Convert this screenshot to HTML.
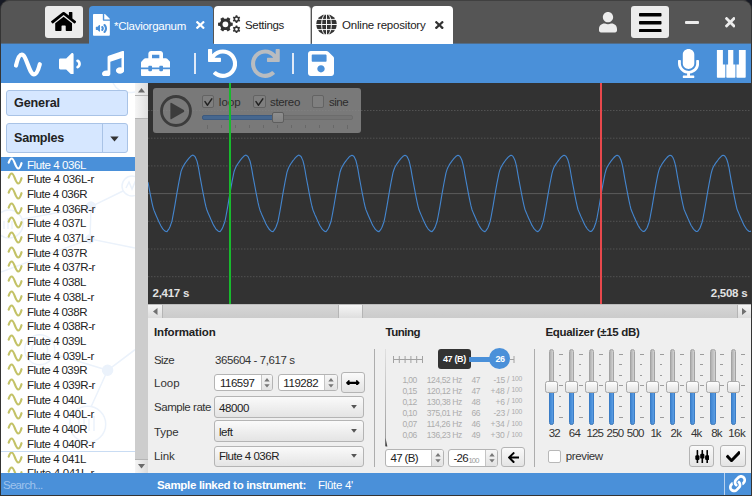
<!DOCTYPE html>
<html lang="en"><head><meta charset="utf-8"><title>Polyphone - Claviorganum</title>
<style>
html,body{margin:0;padding:0}
body{width:752px;height:496px;overflow:hidden;position:relative;background:#171a24;font-family:"Liberation Sans",sans-serif;font-size:12px}
.a{position:absolute;box-sizing:border-box}
.t{position:absolute;white-space:pre;line-height:16px;height:16px}
</style></head><body>
<div class="a" style="left:0px;top:0px;width:752px;height:496px;background:#343434;border-radius:9px 9px 0 0;"></div>
<div class="a" style="left:1px;top:1px;width:750px;height:43px;background:#555555;border-radius:8px 8px 0 0;"></div>
<div class="a" style="left:1px;top:0px;width:750px;height:2px;background:#404040;border-radius:8px 8px 0 0;height:9px;clip-path:inset(0 0 8px 0);"></div>
<div class="a" style="left:1px;top:43px;width:750px;height:40px;background:#4a90d9;"></div>
<div class="a" style="left:1px;top:473px;width:750px;height:22px;background:#4a90d9;"></div>
<div class="a" style="left:1px;top:43px;width:750px;height:1px;background:#516d8a;"></div>
<div class="a" style="left:45px;top:6px;width:38px;height:32px;background:#ececec;border-radius:3px;"></div>
<svg class="a" style="left:51.00px;top:12.25px" width="25.25" height="19.00" viewBox="-0.01 32.05 576.04 447.95" preserveAspectRatio="none"><path fill="#000" d="M280.37 148.26L96 300.11V464a16 16 0 0 0 16 16l112.06-.29a16 16 0 0 0 15.92-16V368a16 16 0 0 1 16-16h64a16 16 0 0 1 16 16v95.64a16 16 0 0 0 16 16.05L464 480a16 16 0 0 0 16-16V300L295.67 148.26a12.19 12.19 0 0 0-15.3 0zM571.6 251.47L488 182.56V44.05a12 12 0 0 0-12-12h-56a12 12 0 0 0-12 12v72.61L318.47 43a48 48 0 0 0-61 0L4.34 251.47a12 12 0 0 0-1.6 16.9l25.5 31A12 12 0 0 0 45.15 301l235.22-193.74a12.19 12.19 0 0 1 15.3 0L530.9 301a12 12 0 0 0 16.9-1.6l25.5-31a12 12 0 0 0-1.7-16.93z"/></svg>
<div class="a" style="left:88.8px;top:6.4px;width:124.7px;height:37.6px;background:#4a90d9;border-radius:4px 4px 0 0;"></div>
<svg class="a" style="left:92.90px;top:13.75px" width="16.85" height="21.85" viewBox="0 0 384 512" preserveAspectRatio="none"><path fill="#fff" d="M224 136V0H24C10.7 0 0 10.7 0 24v464c0 13.3 10.7 24 24 24h336c13.3 0 24-10.7 24-24V160H248c-13.2 0-24-10.8-24-24zm-64 268c0 10.7-12.9 16-20.5 8.500L104 376H76c-6.600 0-12-5.400-12-12v-56c0-6.600 5.400-12 12-12h28l35.500-36.500c7.600-7.600 20.500-2.200 20.500 8.500v136zm33.200-47.600c9.100-9.300 9.100-24.100 0-33.400-22.100-22.800 12.200-56.200 34.400-33.500 27.200 27.900 27.200 72.400 0 100.400-21.800 22.300-56.900-10.400-34.400-33.500zm86-117.100c54.400 55.900 54.400 144.800 0 200.800-21.800 22.400-57-10.300-34.400-33.500 36.200-37.200 36.300-96.500 0-133.800-22.100-22.800 12.300-56.300 34.400-33.500zM384 121.900v6.100H256V0h6.100c6.400 0 12.500 2.500 17 7l97.900 98c4.500 4.500 7 10.600 7 16.900z"/></svg>
<span class="t" style="left:114.00px;top:17.82px;font-size:11.5px;color:#fff;letter-spacing:-0.263px;">*Claviorganum</span>
<svg class="a" style="left:196.20px;top:21.30px" width="8.60" height="8.00" viewBox="0 80 352 352" preserveAspectRatio="none"><path fill="#fff" d="M242.72 256l100.07-100.07c12.28-12.28 12.28-32.19 0-44.48l-22.24-22.24c-12.28-12.28-32.19-12.28-44.48 0L176 189.28 75.93 89.21c-12.28-12.28-32.19-12.28-44.48 0L9.21 111.45c-12.28 12.28-12.28 32.19 0 44.48L109.28 256 9.21 356.070c-12.28 12.28-12.28 32.19 0 44.48l22.24 22.24c12.28 12.28 32.2 12.28 44.48 0L176 322.72l100.07 100.07c12.28 12.28 32.2 12.28 44.48 0l22.24-22.24c12.28-12.28 12.28-32.19 0-44.48L242.72 256z"/></svg>
<div class="a" style="left:213.5px;top:6.4px;width:97.5px;height:37.6px;background:#fff;border-radius:4px 4px 0 0;border-right:1px solid #bdbdbd;"></div>
<svg class="a" style="left:217px;top:14px;" width="25" height="22" viewBox="0 0 25 22"><path d="M15.74 8.74 L15.74 11.86 L13.80 12.12 L12.68 14.07 L13.42 15.87 L10.72 17.43 L9.53 15.89 L7.27 15.89 L6.08 17.43 L3.38 15.87 L4.12 14.07 L3.00 12.12 L1.06 11.86 L1.06 8.74 L3.00 8.48 L4.12 6.53 L3.38 4.73 L6.08 3.17 L7.27 4.71 L9.53 4.71 L10.72 3.17 L13.42 4.73 L12.68 6.53 L13.80 8.48Z M11.30 10.30 A2.9 2.9 0 1 0 5.50 10.30 A2.9 2.9 0 1 0 11.30 10.30Z" fill="#333" fill-rule="evenodd"/><path d="M23.21 6.29 L22.41 7.70 L21.46 7.31 L20.45 7.89 L20.32 8.91 L18.70 8.92 L18.57 7.90 L17.56 7.32 L16.61 7.72 L15.80 6.32 L16.61 5.69 L16.61 4.53 L15.79 3.91 L16.59 2.50 L17.54 2.89 L18.55 2.31 L18.68 1.29 L20.30 1.28 L20.43 2.30 L21.44 2.88 L22.39 2.48 L23.20 3.88 L22.39 4.51 L22.39 5.67Z M20.85 5.10 A1.35 1.35 0 1 0 18.15 5.10 A1.35 1.35 0 1 0 20.85 5.10Z" fill="#333" fill-rule="evenodd"/><path d="M23.21 16.49 L22.41 17.90 L21.46 17.51 L20.45 18.09 L20.32 19.11 L18.70 19.12 L18.57 18.10 L17.56 17.52 L16.61 17.92 L15.80 16.52 L16.61 15.89 L16.61 14.73 L15.79 14.11 L16.59 12.70 L17.54 13.09 L18.55 12.51 L18.68 11.49 L20.30 11.48 L20.43 12.50 L21.44 13.08 L22.39 12.68 L23.20 14.08 L22.39 14.71 L22.39 15.87Z M20.85 15.30 A1.35 1.35 0 1 0 18.15 15.30 A1.35 1.35 0 1 0 20.85 15.30Z" fill="#333" fill-rule="evenodd"/></svg>
<span class="t" style="left:245.00px;top:17.37px;font-size:11.5px;color:#222;letter-spacing:-0.319px;">Settings</span>
<div class="a" style="left:312px;top:6.4px;width:140.5px;height:37.6px;background:#fff;border-radius:4px 4px 0 0;"></div>
<svg class="a" style="left:316px;top:14.4px;" width="21" height="21" viewBox="0 0 21 21"><circle cx="10.5" cy="10.5" r="10.3" fill="#333"/><g stroke="#fff" stroke-width="0.95" fill="none"><ellipse cx="10.5" cy="10.5" rx="4.9" ry="10.8"/><path d="M10.5 0 V21 M0 10.5 H21 M0 5.4 H21 M0 15.6 H21"/></g></svg>
<span class="t" style="left:342.00px;top:17.37px;font-size:11.5px;color:#222;letter-spacing:-0.201px;">Online repository</span>
<svg class="a" style="left:435.30px;top:21.40px" width="8.60" height="8.10" viewBox="0 80 352 352" preserveAspectRatio="none"><path fill="#333" d="M242.72 256l100.07-100.07c12.28-12.28 12.28-32.19 0-44.48l-22.24-22.24c-12.28-12.28-32.19-12.28-44.48 0L176 189.28 75.93 89.21c-12.28-12.28-32.19-12.28-44.48 0L9.21 111.45c-12.28 12.28-12.28 32.19 0 44.48L109.28 256 9.21 356.070c-12.28 12.28-12.28 32.19 0 44.48l22.24 22.24c12.28 12.28 32.2 12.28 44.48 0L176 322.72l100.07 100.07c12.28 12.28 32.2 12.28 44.48 0l22.24-22.24c12.28-12.28 12.28-32.19 0-44.48L242.72 256z"/></svg>
<svg class="a" style="left:599.00px;top:12.00px" width="18.00" height="20.50" viewBox="0 0 448 512" preserveAspectRatio="none"><path fill="#ececec" d="M224 256c70.7 0 128-57.3 128-128S294.7 0 224 0 96 57.3 96 128s57.3 128 128 128zm89.6 32h-16.7c-22.2 10.2-46.9 16-72.9 16s-50.6-5.8-72.9-16h-16.7C60.2 288 0 348.2 0 422.4V464c0 26.5 21.5 48 48 48h352c26.5 0 48-21.5 48-48v-41.6c0-74.2-60.2-134.4-134.4-134.4z"/></svg>
<div class="a" style="left:631px;top:6px;width:38px;height:32px;background:#ececec;border-radius:3px;"></div>
<svg class="a" style="left:639.00px;top:12.50px" width="22.50" height="19.50" viewBox="0 60 448 392" preserveAspectRatio="none"><path fill="#000" d="M16 132h416c8.837 0 16-7.163 16-16V76c0-8.837-7.163-16-16-16H16C7.163 60 0 67.163 0 76v40c0 8.837 7.163 16 16 16zm0 160h416c8.837 0 16-7.163 16-16v-40c0-8.837-7.163-16-16-16H16c-8.837 0-16 7.163-16 16v40c0 8.837 7.163 16 16 16zm0 160h416c8.837 0 16-7.163 16-16v-40c0-8.837-7.163-16-16-16H16c-8.837 0-16 7.163-16 16v40c0 8.837 7.163 16 16 16z"/></svg>
<div class="a" style="left:685px;top:20.6px;width:13.5px;height:3.2px;background:#ececec;border-radius:1px;"></div>
<svg class="a" style="left:724.50px;top:17.00px" width="10.50" height="10.50" viewBox="0 80 352 352" preserveAspectRatio="none"><path fill="#ececec" d="M242.72 256l100.07-100.07c12.28-12.28 12.28-32.19 0-44.48l-22.24-22.24c-12.28-12.28-32.19-12.28-44.48 0L176 189.28 75.93 89.21c-12.28-12.28-32.19-12.28-44.48 0L9.21 111.45c-12.28 12.28-12.28 32.19 0 44.48L109.28 256 9.21 356.070c-12.28 12.28-12.28 32.19 0 44.48l22.24 22.24c12.28 12.28 32.2 12.28 44.48 0L176 322.72l100.07 100.07c12.28 12.28 32.2 12.28 44.48 0l22.24-22.24c12.28-12.28 12.28-32.19 0-44.48L242.72 256z"/></svg>
<svg class="a" style="left:10px;top:48px;" width="36" height="32" viewBox="0 0 36 32"><path d="M6 17.5 C7.5 11 9.5 6.7 11.8 6.7 C16.5 6.7 19 26.3 24 26.3 C26.5 26.3 28.3 22 29.8 16.2" stroke="#fff" stroke-width="4.2" fill="none" stroke-linecap="round"/></svg>
<svg class="a" style="left:59.00px;top:52.60px" width="21.90" height="21.90" viewBox="0 65.0 384.01 384.0" preserveAspectRatio="none"><path fill="#fff" d="M215.03 72.04L126.06 161H24c-13.26 0-24 10.74-24 24v144c0 13.25 10.74 24 24 24h102.06l88.97 88.95c15.03 15.03 40.97 4.47 40.97-16.97V89.02c0-21.47-25.96-31.98-40.97-16.98zm123.2 108.08c-11.58-6.33-26.19-2.16-32.61 9.45-6.39 11.61-2.16 26.2 9.45 32.61C327.98 229.28 336 242.62 336 257c0 14.38-8.02 27.72-20.92 34.81-11.61 6.41-15.84 21-9.45 32.61 6.43 11.66 21.05 15.8 32.61 9.45 28.23-15.55 45.77-45 45.77-76.88s-17.54-61.32-45.78-76.87z"/></svg>
<svg class="a" style="left:101.75px;top:50.50px" width="22.25" height="25.90" viewBox="0 0.03 512 511.97" preserveAspectRatio="none"><path fill="#fff" d="M470.38 1.51L150.41 96A32 32 0 0 0 128 126.51v261.41A139 139 0 0 0 96 384c-53 0-96 28.66-96 64s43 64 96 64 96-28.66 96-64V214.32l256-75v184.61a138.4 138.4 0 0 0-32-3.93c-53 0-96 28.66-96 64s43 64 96 64 96-28.65 96-64V32a32 32 0 0 0-41.62-30.49z"/></svg>
<svg class="a" style="left:140.90px;top:50.75px" width="29.35" height="25.65" viewBox="0 32 512 448" preserveAspectRatio="none"><path fill="#fff" d="M502.63 214.63l-45.25-45.25c-6-6-14.140-9.370-22.630-9.370H384V80c0-26.510-21.490-48-48-48H176c-26.510 0-48 21.490-48 48v80H77.250c-8.490 0-16.620 3.370-22.630 9.370L9.370 214.630c-6 6-9.370 14.140-9.370 22.630V320h128v-16c0-8.840 7.160-16 16-16h32c8.840 0 16 7.160 16 16v16h128v-16c0-8.840 7.160-16 16-16h32c8.840 0 16 7.160 16 16v16h128v-82.750c0-8.480-3.370-16.620-9.370-22.620zM320 160H192V96h128v64zm64 208c0 8.840-7.160 16-16 16h-32c-8.840 0-16-7.160-16-16v-16H192v16c0 8.840-7.160 16-16 16h-32c-8.840 0-16-7.160-16-16v-16H0v96c0 17.670 14.330 32 32 32h448c17.670 0 32-14.330 32-32v-96H384v16z"/></svg>
<div class="a" style="left:194px;top:52.5px;width:2px;height:21.5px;background:#dfe9f7;"></div>
<div class="a" style="left:292px;top:52.5px;width:2px;height:21.5px;background:#dfe9f7;"></div>
<svg class="a" style="left:208.10px;top:48.75px" width="29.15" height="29.00" viewBox="0 0 504.33 504" preserveAspectRatio="none"><path fill="#fff" d="M212.333 224.333H12c-6.627 0-12-5.373-12-12V12C0 5.373 5.373 0 12 0h48c6.627 0 12 5.373 12 12v78.112C117.773 39.279 184.26 7.47 258.175 8.007c136.906.994 246.448 111.623 246.157 248.532C504.041 393.258 393.12 504 256.333 504c-64.089 0-122.496-24.313-166.51-64.215-5.099-4.622-5.334-12.554-.467-17.42l33.967-33.967c4.474-4.474 11.662-4.717 16.401-.525C170.76 415.336 211.58 432 256.333 432c97.268 0 176-78.716 176-176 0-97.267-78.716-176-176-176-58.496 0-110.28 28.476-142.274 72.333h98.274c6.627 0 12 5.373 12 12v48c0 6.627-5.373 12-12 12z"/></svg>
<svg class="a" style="left:251.25px;top:48.75px" width="28.75" height="29.00" viewBox="0 0 504.33 504" preserveAspectRatio="none"><path fill="#b9bcc0" transform="translate(504.33,0) scale(-1,1)" d="M212.333 224.333H12c-6.627 0-12-5.373-12-12V12C0 5.373 5.373 0 12 0h48c6.627 0 12 5.373 12 12v78.112C117.773 39.279 184.26 7.47 258.175 8.007c136.906.994 246.448 111.623 246.157 248.532C504.041 393.258 393.12 504 256.333 504c-64.089 0-122.496-24.313-166.51-64.215-5.099-4.622-5.334-12.554-.467-17.42l33.967-33.967c4.474-4.474 11.662-4.717 16.401-.525C170.76 415.336 211.58 432 256.333 432c97.268 0 176-78.716 176-176 0-97.267-78.716-176-176-176-58.496 0-110.28 28.476-142.274 72.333h98.274c6.627 0 12 5.373 12 12v48c0 6.627-5.373 12-12 12z"/></svg>
<svg class="a" style="left:307.90px;top:51.20px" width="26.00" height="25.00" viewBox="0 32 448 448" preserveAspectRatio="none"><path fill="#fff" d="M433.941 129.941l-83.882-83.882A48 48 0 0 0 316.118 32H48C21.49 32 0 53.49 0 80v352c0 26.51 21.49 48 48 48h352c26.51 0 48-21.49 48-48V163.882a48 48 0 0 0-14.059-33.941zM224 416c-35.346 0-64-28.654-64-64 0-35.346 28.654-64 64-64s64 28.654 64 64c0 35.346-28.654 64-64 64zm96-304.52V212c0 6.627-5.373 12-12 12H76c-6.627 0-12-5.373-12-12V108c0-6.627 5.373-12 12-12h228.52c3.183 0 6.235 1.264 8.485 3.515l3.48 3.48A11.996 11.996 0 0 1 320 111.48z"/></svg>
<svg class="a" style="left:678.00px;top:48.80px" width="21.10" height="29.20" viewBox="0 0 352 512" preserveAspectRatio="none"><path fill="#fff" d="M176 352c53.02 0 96-42.98 96-96V96c0-53.02-42.98-96-96-96S80 42.98 80 96v160c0 53.02 42.98 96 96 96zm160-160h-16c-8.84 0-16 7.16-16 16v48c0 74.8-64.49 134.82-140.79 127.38C96.71 376.89 48 317.11 48 250.3V208c0-8.84-7.16-16-16-16H16c-8.84 0-16 7.16-16 16v40.16c0 89.64 63.97 169.55 152 181.69V464H96c-8.84 0-16 7.16-16 16v16c0 8.84 7.16 16 16 16h160c8.84 0 16-7.16 16-16v-16c0-8.84-7.160-16-16-16h-56v-33.77C285.71 418.47 352 344.9 352 256v-48c0-8.840-7.160-16-16-16z"/></svg>
<svg class="a" style="left:716px;top:49px;" width="31" height="29" viewBox="0 0 31 29"><path d="M0.9 1 H6.9 V15.6 H9.3 V28 Q9.3 28.7 8.6 28.7 H1.6 Q0.9 28.7 0.9 28Z" fill="#fff"/><path d="M12.1 1 H17.3 V15.6 H19.4 V28 Q19.4 28.7 18.7 28.7 H11 Q10.3 28.7 10.3 28 V15.6 H12.1Z" fill="#fff"/><path d="M22.9 1 H29.7 V28 Q29.7 28.7 29 28.7 H21.1 Q20.4 28.7 20.4 28 V15.6 H22.9Z" fill="#fff"/></svg>
<div class="a" style="left:1px;top:83px;width:134px;height:390px;background:#fff;"></div>
<svg class="a" style="left:1px;top:83px;" width="134" height="390" viewBox="0 0 134 390"><g stroke="#ebf2fb" stroke-width="1.5" fill="none"><path d="M112 0 Q118 12 134 9"/><circle cx="131" cy="103" r="10"/><path d="M125 105 L128 99 L131 106 L134 99 L137 105"/><circle cx="8" cy="141" r="14"/><path d="M3 138 V146 M7 135 V146 M11 138 V146"/><path d="M90 123.6 L89 156 L134 165 M89 156 L0 189 M90 123.6 L22 136 M90 123.6 L122 108"/><circle cx="90" cy="123.6" r="4.5" fill="#ebf2fb"/><circle cx="89" cy="156" r="4" fill="#ebf2fb"/><circle cx="38.7" cy="266.7" r="15"/><circle cx="38.7" cy="266.7" r="8"/><path d="M106.6 287.3 L134 266.7 M106.6 287.3 L90 324 M106.6 287.3 L53 271"/><circle cx="106.6" cy="287.3" r="5" fill="#ebf2fb"/><circle cx="86.7" cy="341.2" r="18"/><path d="M78 336 V348 M83 333 V348 M88 336 V348 M93 333 V348"/></g></svg>
<div class="a" style="left:6px;top:90px;width:122px;height:25.8px;background:#d6e7ff;border:1px solid #a9c3e6;border-radius:3px;"></div>
<span class="t" style="left:14.00px;top:95.23px;font-size:12.6px;color:#222;font-weight:700;letter-spacing:-0.132px;">General</span>
<div class="a" style="left:6px;top:123px;width:122px;height:30px;background:#d6e7ff;border:1px solid #a9c3e6;border-radius:3px;"></div>
<div class="a" style="left:101.5px;top:124px;width:1px;height:28px;background:#a9c3e6;"></div>
<span class="t" style="left:14.00px;top:130.23px;font-size:12.6px;color:#222;font-weight:700;letter-spacing:-0.261px;">Samples</span>
<svg class="a" style="left:110px;top:135.5px;" width="9" height="6" viewBox="0 0 9 6"><path d="M0.3 0.5 H8.7 L4.5 5.6Z" fill="#333"/></svg>
<div class="a" style="left:1px;top:157px;width:134px;height:14px;background:#4a90d9;"></div>
<svg class="a" style="left:7.4px;top:157.4px;" width="16" height="13" viewBox="0 0 16 13"><path d="M1.7 5.6 C2.7 2.6 3.6 1.5 4.7 1.5 C7.4 1.5 8.4 11.5 11.2 11.5 C12.5 11.5 13.5 9.6 14.5 6.2" stroke="#fff" stroke-width="2.2" fill="none" stroke-linecap="round"/></svg>
<span class="t" style="left:27.00px;top:156.52px;font-size:11.5px;color:#fff;letter-spacing:-0.411px;">Flute 4 036L</span>
<svg class="a" style="left:7.4px;top:172.1px;" width="16" height="13" viewBox="0 0 16 13"><path d="M1.7 5.6 C2.7 2.6 3.6 1.5 4.7 1.5 C7.4 1.5 8.4 11.5 11.2 11.5 C12.5 11.5 13.5 9.6 14.5 6.2" stroke="#c3c267" stroke-width="2.2" fill="none" stroke-linecap="round"/></svg>
<span class="t" style="left:27.00px;top:171.22px;font-size:11.5px;color:#222;letter-spacing:-0.328px;">Flute 4 036L-r</span>
<svg class="a" style="left:7.4px;top:186.8px;" width="16" height="13" viewBox="0 0 16 13"><path d="M1.7 5.6 C2.7 2.6 3.6 1.5 4.7 1.5 C7.4 1.5 8.4 11.5 11.2 11.5 C12.5 11.5 13.5 9.6 14.5 6.2" stroke="#c3c267" stroke-width="2.2" fill="none" stroke-linecap="round"/></svg>
<span class="t" style="left:27.00px;top:185.92px;font-size:11.5px;color:#222;letter-spacing:-0.487px;">Flute 4 036R</span>
<svg class="a" style="left:7.4px;top:201.5px;" width="16" height="13" viewBox="0 0 16 13"><path d="M1.7 5.6 C2.7 2.6 3.6 1.5 4.7 1.5 C7.4 1.5 8.4 11.5 11.2 11.5 C12.5 11.5 13.5 9.6 14.5 6.2" stroke="#c3c267" stroke-width="2.2" fill="none" stroke-linecap="round"/></svg>
<span class="t" style="left:27.00px;top:200.62px;font-size:11.5px;color:#222;letter-spacing:-0.393px;">Flute 4 036R-r</span>
<svg class="a" style="left:7.4px;top:216.20000000000002px;" width="16" height="13" viewBox="0 0 16 13"><path d="M1.7 5.6 C2.7 2.6 3.6 1.5 4.7 1.5 C7.4 1.5 8.4 11.5 11.2 11.5 C12.5 11.5 13.5 9.6 14.5 6.2" stroke="#c3c267" stroke-width="2.2" fill="none" stroke-linecap="round"/></svg>
<span class="t" style="left:27.00px;top:215.32px;font-size:11.5px;color:#222;letter-spacing:-0.411px;">Flute 4 037L</span>
<svg class="a" style="left:7.4px;top:230.9px;" width="16" height="13" viewBox="0 0 16 13"><path d="M1.7 5.6 C2.7 2.6 3.6 1.5 4.7 1.5 C7.4 1.5 8.4 11.5 11.2 11.5 C12.5 11.5 13.5 9.6 14.5 6.2" stroke="#c3c267" stroke-width="2.2" fill="none" stroke-linecap="round"/></svg>
<span class="t" style="left:27.00px;top:230.02px;font-size:11.5px;color:#222;letter-spacing:-0.328px;">Flute 4 037L-r</span>
<svg class="a" style="left:7.4px;top:245.6px;" width="16" height="13" viewBox="0 0 16 13"><path d="M1.7 5.6 C2.7 2.6 3.6 1.5 4.7 1.5 C7.4 1.5 8.4 11.5 11.2 11.5 C12.5 11.5 13.5 9.6 14.5 6.2" stroke="#c3c267" stroke-width="2.2" fill="none" stroke-linecap="round"/></svg>
<span class="t" style="left:27.00px;top:244.72px;font-size:11.5px;color:#222;letter-spacing:-0.487px;">Flute 4 037R</span>
<svg class="a" style="left:7.4px;top:260.29999999999995px;" width="16" height="13" viewBox="0 0 16 13"><path d="M1.7 5.6 C2.7 2.6 3.6 1.5 4.7 1.5 C7.4 1.5 8.4 11.5 11.2 11.5 C12.5 11.5 13.5 9.6 14.5 6.2" stroke="#c3c267" stroke-width="2.2" fill="none" stroke-linecap="round"/></svg>
<span class="t" style="left:27.00px;top:259.42px;font-size:11.5px;color:#222;letter-spacing:-0.393px;">Flute 4 037R-r</span>
<svg class="a" style="left:7.4px;top:275.0px;" width="16" height="13" viewBox="0 0 16 13"><path d="M1.7 5.6 C2.7 2.6 3.6 1.5 4.7 1.5 C7.4 1.5 8.4 11.5 11.2 11.5 C12.5 11.5 13.5 9.6 14.5 6.2" stroke="#c3c267" stroke-width="2.2" fill="none" stroke-linecap="round"/></svg>
<span class="t" style="left:27.00px;top:274.12px;font-size:11.5px;color:#222;letter-spacing:-0.411px;">Flute 4 038L</span>
<svg class="a" style="left:7.4px;top:289.69999999999993px;" width="16" height="13" viewBox="0 0 16 13"><path d="M1.7 5.6 C2.7 2.6 3.6 1.5 4.7 1.5 C7.4 1.5 8.4 11.5 11.2 11.5 C12.5 11.5 13.5 9.6 14.5 6.2" stroke="#c3c267" stroke-width="2.2" fill="none" stroke-linecap="round"/></svg>
<span class="t" style="left:27.00px;top:288.82px;font-size:11.5px;color:#222;letter-spacing:-0.328px;">Flute 4 038L-r</span>
<svg class="a" style="left:7.4px;top:304.4px;" width="16" height="13" viewBox="0 0 16 13"><path d="M1.7 5.6 C2.7 2.6 3.6 1.5 4.7 1.5 C7.4 1.5 8.4 11.5 11.2 11.5 C12.5 11.5 13.5 9.6 14.5 6.2" stroke="#c3c267" stroke-width="2.2" fill="none" stroke-linecap="round"/></svg>
<span class="t" style="left:27.00px;top:303.52px;font-size:11.5px;color:#222;letter-spacing:-0.487px;">Flute 4 038R</span>
<svg class="a" style="left:7.4px;top:319.09999999999997px;" width="16" height="13" viewBox="0 0 16 13"><path d="M1.7 5.6 C2.7 2.6 3.6 1.5 4.7 1.5 C7.4 1.5 8.4 11.5 11.2 11.5 C12.5 11.5 13.5 9.6 14.5 6.2" stroke="#c3c267" stroke-width="2.2" fill="none" stroke-linecap="round"/></svg>
<span class="t" style="left:27.00px;top:318.22px;font-size:11.5px;color:#222;letter-spacing:-0.393px;">Flute 4 038R-r</span>
<svg class="a" style="left:7.4px;top:333.79999999999995px;" width="16" height="13" viewBox="0 0 16 13"><path d="M1.7 5.6 C2.7 2.6 3.6 1.5 4.7 1.5 C7.4 1.5 8.4 11.5 11.2 11.5 C12.5 11.5 13.5 9.6 14.5 6.2" stroke="#c3c267" stroke-width="2.2" fill="none" stroke-linecap="round"/></svg>
<span class="t" style="left:27.00px;top:332.92px;font-size:11.5px;color:#222;letter-spacing:-0.411px;">Flute 4 039L</span>
<svg class="a" style="left:7.4px;top:348.5px;" width="16" height="13" viewBox="0 0 16 13"><path d="M1.7 5.6 C2.7 2.6 3.6 1.5 4.7 1.5 C7.4 1.5 8.4 11.5 11.2 11.5 C12.5 11.5 13.5 9.6 14.5 6.2" stroke="#c3c267" stroke-width="2.2" fill="none" stroke-linecap="round"/></svg>
<span class="t" style="left:27.00px;top:347.62px;font-size:11.5px;color:#222;letter-spacing:-0.328px;">Flute 4 039L-r</span>
<svg class="a" style="left:7.4px;top:363.19999999999993px;" width="16" height="13" viewBox="0 0 16 13"><path d="M1.7 5.6 C2.7 2.6 3.6 1.5 4.7 1.5 C7.4 1.5 8.4 11.5 11.2 11.5 C12.5 11.5 13.5 9.6 14.5 6.2" stroke="#c3c267" stroke-width="2.2" fill="none" stroke-linecap="round"/></svg>
<span class="t" style="left:27.00px;top:362.32px;font-size:11.5px;color:#222;letter-spacing:-0.487px;">Flute 4 039R</span>
<svg class="a" style="left:7.4px;top:377.9px;" width="16" height="13" viewBox="0 0 16 13"><path d="M1.7 5.6 C2.7 2.6 3.6 1.5 4.7 1.5 C7.4 1.5 8.4 11.5 11.2 11.5 C12.5 11.5 13.5 9.6 14.5 6.2" stroke="#c3c267" stroke-width="2.2" fill="none" stroke-linecap="round"/></svg>
<span class="t" style="left:27.00px;top:377.02px;font-size:11.5px;color:#222;letter-spacing:-0.393px;">Flute 4 039R-r</span>
<svg class="a" style="left:7.4px;top:392.59999999999997px;" width="16" height="13" viewBox="0 0 16 13"><path d="M1.7 5.6 C2.7 2.6 3.6 1.5 4.7 1.5 C7.4 1.5 8.4 11.5 11.2 11.5 C12.5 11.5 13.5 9.6 14.5 6.2" stroke="#c3c267" stroke-width="2.2" fill="none" stroke-linecap="round"/></svg>
<span class="t" style="left:27.00px;top:391.72px;font-size:11.5px;color:#222;letter-spacing:-0.411px;">Flute 4 040L</span>
<svg class="a" style="left:7.4px;top:407.29999999999995px;" width="16" height="13" viewBox="0 0 16 13"><path d="M1.7 5.6 C2.7 2.6 3.6 1.5 4.7 1.5 C7.4 1.5 8.4 11.5 11.2 11.5 C12.5 11.5 13.5 9.6 14.5 6.2" stroke="#c3c267" stroke-width="2.2" fill="none" stroke-linecap="round"/></svg>
<span class="t" style="left:27.00px;top:406.42px;font-size:11.5px;color:#222;letter-spacing:-0.328px;">Flute 4 040L-r</span>
<svg class="a" style="left:7.4px;top:421.99999999999994px;" width="16" height="13" viewBox="0 0 16 13"><path d="M1.7 5.6 C2.7 2.6 3.6 1.5 4.7 1.5 C7.4 1.5 8.4 11.5 11.2 11.5 C12.5 11.5 13.5 9.6 14.5 6.2" stroke="#c3c267" stroke-width="2.2" fill="none" stroke-linecap="round"/></svg>
<span class="t" style="left:27.00px;top:421.12px;font-size:11.5px;color:#222;letter-spacing:-0.487px;">Flute 4 040R</span>
<svg class="a" style="left:7.4px;top:436.7px;" width="16" height="13" viewBox="0 0 16 13"><path d="M1.7 5.6 C2.7 2.6 3.6 1.5 4.7 1.5 C7.4 1.5 8.4 11.5 11.2 11.5 C12.5 11.5 13.5 9.6 14.5 6.2" stroke="#c3c267" stroke-width="2.2" fill="none" stroke-linecap="round"/></svg>
<span class="t" style="left:27.00px;top:435.82px;font-size:11.5px;color:#222;letter-spacing:-0.393px;">Flute 4 040R-r</span>
<svg class="a" style="left:7.4px;top:451.4px;" width="16" height="13" viewBox="0 0 16 13"><path d="M1.7 5.6 C2.7 2.6 3.6 1.5 4.7 1.5 C7.4 1.5 8.4 11.5 11.2 11.5 C12.5 11.5 13.5 9.6 14.5 6.2" stroke="#c3c267" stroke-width="2.2" fill="none" stroke-linecap="round"/></svg>
<span class="t" style="left:27.00px;top:450.52px;font-size:11.5px;color:#222;letter-spacing:-0.411px;">Flute 4 041L</span>
<svg class="a" style="left:7.4px;top:466.09999999999997px;" width="16" height="13" viewBox="0 0 16 13"><path d="M1.7 5.6 C2.7 2.6 3.6 1.5 4.7 1.5 C7.4 1.5 8.4 11.5 11.2 11.5 C12.5 11.5 13.5 9.6 14.5 6.2" stroke="#c3c267" stroke-width="2.2" fill="none" stroke-linecap="round"/></svg>
<span class="t" style="left:27.00px;top:465.22px;font-size:11.5px;color:#222;letter-spacing:-0.328px;">Flute 4 041L-r</span>
<div class="a" style="left:1px;top:450.5px;width:134px;height:1px;background:#c9dcf3;"></div>
<div class="a" style="left:135px;top:83px;width:13px;height:390px;background:#cdcdcd;"></div>
<div class="a" style="left:135px;top:83px;width:13px;height:12.5px;background:linear-gradient(90deg,#f4f4f4,#dcdcdc);border-bottom:1px solid #b5b5b5;"></div>
<svg class="a" style="left:138.2px;top:88px;" width="7" height="4.5" viewBox="0 0 7 4.5"><path d="M0 4.5 L3.5 0 L7 4.5Z" fill="#6a6a6a"/></svg>
<div class="a" style="left:135px;top:95.5px;width:13px;height:23.5px;background:linear-gradient(90deg,#f6f6f6,#dedede);border-bottom:1px solid #b5b5b5;"></div>
<div class="a" style="left:135px;top:459px;width:13px;height:14px;background:linear-gradient(90deg,#f4f4f4,#dcdcdc);border-top:1px solid #b5b5b5;"></div>
<svg class="a" style="left:138.2px;top:464px;" width="7" height="4.5" viewBox="0 0 7 4.5"><path d="M0 0 L3.5 4.5 L7 0Z" fill="#6a6a6a"/></svg>
<div class="a" style="left:148px;top:83px;width:603px;height:221px;background:#323232;"></div>
<svg class="a" style="left:148px;top:83px;" width="603" height="221" viewBox="0 0 603 221"><path d="M0 27.50 H604" stroke="#525252" stroke-width="1" stroke-dasharray="1.5 1.5"/><path d="M0 55.20 H604" stroke="#525252" stroke-width="1" stroke-dasharray="1.5 1.5"/><path d="M0 82.90 H604" stroke="#525252" stroke-width="1" stroke-dasharray="1.5 1.5"/><path d="M0 138.30 H604" stroke="#525252" stroke-width="1" stroke-dasharray="1.5 1.5"/><path d="M0 166.00 H604" stroke="#525252" stroke-width="1" stroke-dasharray="1.5 1.5"/><path d="M0 193.70 H604" stroke="#525252" stroke-width="1" stroke-dasharray="1.5 1.5"/><path d="M0 110.60 H604" stroke="#5c5c5c" stroke-width="1"/><path d="M0.0 99.2 L1.0 104.5 L2.0 109.8 L3.0 114.8 L4.0 119.8 L5.0 124.1 L6.0 127.4 L7.0 129.8 L8.0 132.2 L9.0 134.5 L10.0 136.7 L11.0 138.9 L12.0 141.1 L13.0 143.0 L14.0 144.6 L15.0 146.1 L16.0 147.1 L17.0 148.0 L18.0 148.5 L19.0 148.6 L20.0 147.2 L21.0 145.8 L22.0 143.7 L23.0 140.9 L24.0 138.1 L25.0 132.7 L26.0 127.3 L27.0 121.6 L28.0 115.6 L29.0 109.6 L30.0 104.1 L31.0 98.6 L32.0 93.6 L33.0 88.6 L34.0 85.9 L35.0 83.7 L36.0 82.0 L37.0 80.4 L38.0 79.0 L39.0 77.6 L40.0 76.3 L41.0 75.1 L42.0 74.1 L43.0 73.1 L44.0 72.6 L45.0 72.1 L46.0 72.8 L47.0 73.6 L48.0 75.8 L49.0 78.1 L50.0 82.4 L51.0 87.6 L52.0 93.6 L53.0 98.9 L54.0 104.3 L55.0 109.6 L56.0 114.6 L57.0 119.6 L58.0 123.9 L59.0 127.3 L60.0 129.7 L61.0 132.1 L62.0 134.3 L63.0 136.6 L64.0 138.8 L65.0 141.0 L66.0 142.9 L67.0 144.5 L68.0 146.1 L69.0 147.0 L70.0 147.9 L71.0 148.5 L72.0 148.6 L73.0 147.3 L74.0 145.9 L75.0 143.8 L76.0 141.0 L77.0 138.2 L78.0 133.0 L79.0 127.6 L80.0 121.9 L81.0 115.9 L82.0 109.9 L83.0 104.4 L84.0 98.9 L85.0 93.8 L86.0 88.8 L87.0 86.1 L88.0 83.8 L89.0 82.1 L90.0 80.5 L91.0 79.1 L92.0 77.7 L93.0 76.4 L94.0 75.2 L95.0 74.1 L96.0 73.1 L97.0 72.6 L98.0 72.1 L99.0 72.8 L100.0 73.6 L101.0 75.7 L102.0 78.0 L103.0 82.2 L104.0 87.3 L105.0 93.3 L106.0 98.7 L107.0 104.0 L108.0 109.3 L109.0 114.4 L110.0 119.4 L111.0 123.7 L112.0 127.2 L113.0 129.6 L114.0 132.0 L115.0 134.2 L116.0 136.5 L117.0 138.7 L118.0 140.9 L119.0 142.8 L120.0 144.4 L121.0 146.0 L122.0 147.0 L123.0 147.9 L124.0 148.5 L125.0 148.6 L126.0 147.3 L127.0 145.9 L128.0 144.0 L129.0 141.2 L130.0 138.4 L131.0 133.2 L132.0 127.8 L133.0 122.2 L134.0 116.2 L135.0 110.2 L136.0 104.6 L137.0 99.1 L138.0 94.1 L139.0 89.1 L140.0 86.2 L141.0 83.9 L142.0 82.1 L143.0 80.5 L144.0 79.1 L145.0 77.7 L146.0 76.5 L147.0 75.2 L148.0 74.2 L149.0 73.2 L150.0 72.6 L151.0 72.1 L152.0 72.8 L153.0 73.5 L154.0 75.6 L155.0 77.9 L156.0 82.0 L157.0 87.0 L158.0 93.0 L159.0 98.4 L160.0 103.7 L161.0 109.1 L162.0 114.1 L163.0 119.1 L164.0 123.5 L165.0 127.1 L166.0 129.5 L167.0 131.9 L168.0 134.1 L169.0 136.4 L170.0 138.6 L171.0 140.8 L172.0 142.7 L173.0 144.3 L174.0 145.9 L175.0 146.9 L176.0 147.8 L177.0 148.5 L178.0 148.6 L179.0 147.4 L180.0 146.0 L181.0 144.1 L182.0 141.3 L183.0 138.5 L184.0 133.5 L185.0 128.1 L186.0 122.5 L187.0 116.5 L188.0 110.5 L189.0 104.9 L190.0 99.4 L191.0 94.3 L192.0 89.3 L193.0 86.3 L194.0 84.0 L195.0 82.2 L196.0 80.6 L197.0 79.2 L198.0 77.8 L199.0 76.5 L200.0 75.3 L201.0 74.2 L202.0 73.2 L203.0 72.7 L204.0 72.2 L205.0 72.7 L206.0 73.5 L207.0 75.5 L208.0 77.8 L209.0 81.8 L210.0 86.7 L211.0 92.7 L212.0 98.1 L213.0 103.5 L214.0 108.8 L215.0 113.9 L216.0 118.9 L217.0 123.3 L218.0 126.9 L219.0 129.3 L220.0 131.7 L221.0 134.0 L222.0 136.3 L223.0 138.5 L224.0 140.7 L225.0 142.7 L226.0 144.3 L227.0 145.9 L228.0 146.9 L229.0 147.8 L230.0 148.4 L231.0 148.6 L232.0 147.5 L233.0 146.1 L234.0 144.3 L235.0 141.5 L236.0 138.7 L237.0 133.8 L238.0 128.4 L239.0 122.8 L240.0 116.8 L241.0 110.8 L242.0 105.2 L243.0 99.7 L244.0 94.6 L245.0 89.6 L246.0 86.5 L247.0 84.1 L248.0 82.3 L249.0 80.7 L250.0 79.3 L251.0 77.9 L252.0 76.6 L253.0 75.3 L254.0 74.3 L255.0 73.3 L256.0 72.7 L257.0 72.2 L258.0 72.7 L259.0 73.4 L260.0 75.4 L261.0 77.7 L262.0 81.6 L263.0 86.4 L264.0 92.4 L265.0 97.9 L266.0 103.2 L267.0 108.5 L268.0 113.6 L269.0 118.6 L270.0 123.1 L271.0 126.8 L272.0 129.2 L273.0 131.6 L274.0 133.9 L275.0 136.2 L276.0 138.4 L277.0 140.6 L278.0 142.6 L279.0 144.2 L280.0 145.8 L281.0 146.8 L282.0 147.8 L283.0 148.4 L284.0 148.6 L285.0 147.5 L286.0 146.1 L287.0 144.4 L288.0 141.6 L289.0 138.8 L290.0 134.0 L291.0 128.6 L292.0 123.1 L293.0 117.1 L294.0 111.1 L295.0 105.5 L296.0 100.0 L297.0 94.8 L298.0 89.8 L299.0 86.6 L300.0 84.2 L301.0 82.4 L302.0 80.7 L303.0 79.3 L304.0 77.9 L305.0 76.7 L306.0 75.4 L307.0 74.3 L308.0 73.3 L309.0 72.7 L310.0 72.2 L311.0 72.7 L312.0 73.4 L313.0 75.3 L314.0 77.5 L315.0 81.4 L316.0 86.1 L317.0 92.1 L318.0 97.6 L319.0 102.9 L320.0 108.3 L321.0 113.4 L322.0 118.4 L323.0 122.9 L324.0 126.7 L325.0 129.1 L326.0 131.5 L327.0 133.8 L328.0 136.0 L329.0 138.3 L330.0 140.5 L331.0 142.5 L332.0 144.1 L333.0 145.7 L334.0 146.8 L335.0 147.7 L336.0 148.4 L337.0 148.6 L338.0 147.6 L339.0 146.2 L340.0 144.5 L341.0 141.7 L342.0 138.9 L343.0 134.3 L344.0 128.9 L345.0 123.4 L346.0 117.4 L347.0 111.4 L348.0 105.7 L349.0 100.2 L350.0 95.1 L351.0 90.1 L352.0 86.7 L353.0 84.2 L354.0 82.5 L355.0 80.8 L356.0 79.4 L357.0 78.0 L358.0 76.7 L359.0 75.5 L360.0 74.4 L361.0 73.4 L362.0 72.8 L363.0 72.2 L364.0 72.6 L365.0 73.4 L366.0 75.2 L367.0 77.4 L368.0 81.1 L369.0 85.8 L370.0 91.8 L371.0 97.3 L372.0 102.7 L373.0 108.0 L374.0 113.1 L375.0 118.1 L376.0 122.6 L377.0 126.6 L378.0 129.0 L379.0 131.4 L380.0 133.7 L381.0 135.9 L382.0 138.1 L383.0 140.3 L384.0 142.4 L385.0 144.0 L386.0 145.6 L387.0 146.7 L388.0 147.7 L389.0 148.4 L390.0 148.6 L391.0 147.7 L392.0 146.3 L393.0 144.7 L394.0 141.9 L395.0 139.1 L396.0 134.6 L397.0 129.2 L398.0 123.7 L399.0 117.7 L400.0 111.7 L401.0 106.0 L402.0 100.5 L403.0 95.3 L404.0 90.3 L405.0 86.9 L406.0 84.3 L407.0 82.6 L408.0 80.9 L409.0 79.5 L410.0 78.1 L411.0 76.8 L412.0 75.5 L413.0 74.4 L414.0 73.4 L415.0 72.8 L416.0 72.3 L417.0 72.6 L418.0 73.3 L419.0 75.1 L420.0 77.3 L421.0 80.9 L422.0 85.5 L423.0 91.5 L424.0 97.1 L425.0 102.4 L426.0 107.7 L427.0 112.9 L428.0 117.9 L429.0 122.4 L430.0 126.5 L431.0 128.9 L432.0 131.3 L433.0 133.6 L434.0 135.8 L435.0 138.0 L436.0 140.2 L437.0 142.3 L438.0 143.9 L439.0 145.5 L440.0 146.7 L441.0 147.6 L442.0 148.4 L443.0 148.5 L444.0 147.8 L445.0 146.4 L446.0 144.8 L447.0 142.0 L448.0 139.2 L449.0 134.9 L450.0 129.5 L451.0 124.0 L452.0 118.0 L453.0 112.0 L454.0 106.3 L455.0 100.8 L456.0 95.6 L457.0 90.6 L458.0 87.0 L459.0 84.4 L460.0 82.7 L461.0 81.0 L462.0 79.6 L463.0 78.2 L464.0 76.8 L465.0 75.6 L466.0 74.5 L467.0 73.5 L468.0 72.8 L469.0 72.3 L470.0 72.6 L471.0 73.3 L472.0 75.0 L473.0 77.2 L474.0 80.7 L475.0 85.2 L476.0 91.2 L477.0 96.8 L478.0 102.1 L479.0 107.5 L480.0 112.6 L481.0 117.6 L482.0 122.2 L483.0 126.3 L484.0 128.7 L485.0 131.1 L486.0 133.5 L487.0 135.7 L488.0 137.9 L489.0 140.1 L490.0 142.3 L491.0 143.9 L492.0 145.5 L493.0 146.7 L494.0 147.6 L495.0 148.4 L496.0 148.5 L497.0 147.8 L498.0 146.4 L499.0 145.0 L500.0 142.2 L501.0 139.4 L502.0 135.1 L503.0 129.7 L504.0 124.3 L505.0 118.3 L506.0 112.3 L507.0 106.6 L508.0 101.1 L509.0 95.8 L510.0 90.8 L511.0 87.1 L512.0 84.5 L513.0 82.8 L514.0 81.0 L515.0 79.6 L516.0 78.2 L517.0 76.9 L518.0 75.7 L519.0 74.5 L520.0 73.5 L521.0 72.8 L522.0 72.3 L523.0 72.5 L524.0 73.3 L525.0 74.8 L526.0 77.1 L527.0 80.5 L528.0 84.9 L529.0 90.9 L530.0 96.5 L531.0 101.9 L532.0 107.2 L533.0 112.4 L534.0 117.4 L535.0 122.0 L536.0 126.2 L537.0 128.6 L538.0 131.0 L539.0 133.3 L540.0 135.6 L541.0 137.8 L542.0 140.0 L543.0 142.2 L544.0 143.8 L545.0 145.4 L546.0 146.6 L547.0 147.5 L548.0 148.4 L549.0 148.5 L550.0 147.9 L551.0 146.5 L552.0 145.1 L553.0 142.3 L554.0 139.5 L555.0 135.4 L556.0 130.0 L557.0 124.6 L558.0 118.6 L559.0 112.6 L560.0 106.8 L561.0 101.3 L562.0 96.1 L563.0 91.1 L564.0 87.3 L565.0 84.6 L566.0 82.8 L567.0 81.1 L568.0 79.7 L569.0 78.3 L570.0 77.0 L571.0 75.7 L572.0 74.6 L573.0 73.6 L574.0 72.8 L575.0 72.3 L576.0 72.5 L577.0 73.2 L578.0 74.7 L579.0 77.0 L580.0 80.3 L581.0 84.6 L582.0 90.6 L583.0 96.3 L584.0 101.6 L585.0 106.9 L586.0 112.1 L587.0 117.1 L588.0 121.8 L589.0 126.1 L590.0 128.5 L591.0 130.9 L592.0 133.2 L593.0 135.5 L594.0 137.7 L595.0 139.9 L596.0 142.1 L597.0 143.7 L598.0 145.3 L599.0 146.6 L600.0 147.5 L601.0 148.4 L602.0 148.5 L603.0 148.0" stroke="#4485cd" stroke-width="1.12" fill="none" stroke-linejoin="round"/></svg>
<span class="t" style="left:152.50px;top:285.02px;font-size:11.5px;color:#e2e2e2;font-weight:700;letter-spacing:-0.266px;">2,417 s</span>
<span class="t" style="left:710.80px;top:285.02px;font-size:11.5px;color:#e2e2e2;font-weight:700;letter-spacing:-0.266px;">2,508 s</span>
<div class="a" style="left:153.4px;top:88px;width:207.4px;height:44.8px;background:rgba(137,137,137,0.82);border-radius:3px;"></div>
<svg class="a" style="left:159.3px;top:93.5px;" width="34" height="34" viewBox="0 0 34 34"><circle cx="17" cy="17" r="14.5" fill="none" stroke="#3c3c3c" stroke-width="2.8"/><path d="M11.4 9.6 Q11.4 8.2 12.6 8.9 L24.8 16.1 Q26 17 24.8 17.9 L12.6 25.1 Q11.4 25.8 11.4 24.4Z" fill="#3c3c3c"/></svg>
<div class="a" style="left:201.6px;top:95.3px;width:12.6px;height:12.6px;background:rgba(255,255,255,0.05);border:1px solid #636363;border-radius:2px;"></div>
<svg class="a" style="left:203.6px;top:97.5px;" width="9" height="8.5" viewBox="0 0 9 8.5"><path d="M1 3.6 L3.5 7.2 L7.8 0.8" stroke="#222" stroke-width="1.5" fill="none" stroke-linecap="round" stroke-linejoin="round"/></svg>
<span class="t" style="left:218.80px;top:93.62px;font-size:11.5px;color:#2c2c2c;letter-spacing:0.065px;">loop</span>
<div class="a" style="left:253.2px;top:95.3px;width:12.6px;height:12.6px;background:rgba(255,255,255,0.05);border:1px solid #636363;border-radius:2px;"></div>
<svg class="a" style="left:255.2px;top:97.5px;" width="9" height="8.5" viewBox="0 0 9 8.5"><path d="M1 3.6 L3.5 7.2 L7.8 0.8" stroke="#222" stroke-width="1.5" fill="none" stroke-linecap="round" stroke-linejoin="round"/></svg>
<span class="t" style="left:270.00px;top:93.62px;font-size:11.5px;color:#2c2c2c;letter-spacing:-0.327px;">stereo</span>
<div class="a" style="left:311.5px;top:95.3px;width:12.6px;height:12.6px;background:rgba(255,255,255,0.05);border:1px solid #636363;border-radius:2px;"></div>
<span class="t" style="left:329.00px;top:93.62px;font-size:11.5px;color:#2c2c2c;letter-spacing:-0.524px;">sine</span>
<div class="a" style="left:202.2px;top:115.2px;width:151px;height:4.4px;background:#747474;border:1px solid #6c6c6c;border-radius:2px;"></div>
<div class="a" style="left:202.2px;top:115.2px;width:74px;height:4.4px;background:#46678f;border:1px solid #3c5a80;border-radius:2px;"></div>
<div class="a" style="left:272.4px;top:112px;width:11.4px;height:11.2px;background:linear-gradient(#8e8e8e,#828282);border:1px solid #5e5e5e;border-radius:2px;"></div>
<div class="a" style="left:206.7px;top:125.4px;width:1px;height:3.6px;background:#686868;"></div>
<div class="a" style="left:220.73999999999998px;top:125.4px;width:1px;height:2.2px;background:#686868;"></div>
<div class="a" style="left:234.77999999999997px;top:125.4px;width:1px;height:2.2px;background:#686868;"></div>
<div class="a" style="left:248.82px;top:125.4px;width:1px;height:2.2px;background:#686868;"></div>
<div class="a" style="left:262.86px;top:125.4px;width:1px;height:2.2px;background:#686868;"></div>
<div class="a" style="left:276.9px;top:125.4px;width:1px;height:2.2px;background:#686868;"></div>
<div class="a" style="left:290.94px;top:125.4px;width:1px;height:2.2px;background:#686868;"></div>
<div class="a" style="left:304.98px;top:125.4px;width:1px;height:2.2px;background:#686868;"></div>
<div class="a" style="left:319.02px;top:125.4px;width:1px;height:2.2px;background:#686868;"></div>
<div class="a" style="left:333.05999999999995px;top:125.4px;width:1px;height:2.2px;background:#686868;"></div>
<div class="a" style="left:347.09999999999997px;top:125.4px;width:1px;height:3.6px;background:#686868;"></div>
<div class="a" style="left:229px;top:83px;width:2.4px;height:221px;background:#18b92d;"></div>
<div class="a" style="left:600px;top:83px;width:2px;height:221px;background:#e8484c;"></div>
<div class="a" style="left:148px;top:304px;width:603px;height:14px;background:linear-gradient(#d6d6d6,#cbcbcb);border-top:1px solid #bcbcbc;"></div>
<div class="a" style="left:148px;top:305px;width:14.5px;height:13px;background:linear-gradient(#f4f4f4,#dcdcdc);border-right:1px solid #b5b5b5;"></div>
<svg class="a" style="left:153px;top:308.2px;" width="4.5" height="7" viewBox="0 0 4.5 7"><path d="M4.5 0 L0 3.5 L4.5 7Z" fill="#707070"/></svg>
<div class="a" style="left:337.5px;top:305px;width:25px;height:13px;background:linear-gradient(#f6f6f6,#dedede);border-left:1px solid #b5b5b5;border-right:1px solid #b5b5b5;"></div>
<div class="a" style="left:737px;top:305px;width:14px;height:13px;background:linear-gradient(#f4f4f4,#dcdcdc);border-left:1px solid #b5b5b5;"></div>
<svg class="a" style="left:742px;top:308.2px;" width="4.5" height="7" viewBox="0 0 4.5 7"><path d="M0 0 L4.5 3.5 L0 7Z" fill="#707070"/></svg>
<div class="a" style="left:148px;top:318px;width:603px;height:155px;background:#efefef;"></div>
<span class="t" style="left:154.00px;top:324.02px;font-size:11.5px;color:#222;font-weight:700;letter-spacing:-0.158px;">Information</span>
<span class="t" style="left:385.50px;top:324.02px;font-size:11.5px;color:#222;font-weight:700;letter-spacing:-0.494px;">Tuning</span>
<span class="t" style="left:545.50px;top:324.02px;font-size:11.5px;color:#222;font-weight:700;letter-spacing:-0.311px;">Equalizer (±15 dB)</span>
<div class="a" style="left:374.0px;top:348.5px;width:1px;height:118px;background:#adadad;"></div>
<div class="a" style="left:534.0px;top:348.5px;width:1px;height:118px;background:#adadad;"></div>
<span class="t" style="left:154.00px;top:351.62px;font-size:11.5px;color:#333;letter-spacing:-0.593px;">Size</span>
<span class="t" style="left:154.00px;top:375.22px;font-size:11.5px;color:#333;letter-spacing:-0.020px;">Loop</span>
<span class="t" style="left:154.00px;top:399.42px;font-size:11.5px;color:#333;letter-spacing:-0.454px;">Sample rate</span>
<span class="t" style="left:154.00px;top:423.62px;font-size:11.5px;color:#333;letter-spacing:-0.107px;">Type</span>
<span class="t" style="left:154.00px;top:448.32px;font-size:11.5px;color:#333;letter-spacing:-0.149px;">Link</span>
<span class="t" style="left:215.00px;top:351.62px;font-size:11.5px;color:#333;letter-spacing:-0.426px;">365604 - 7,617 s</span>
<div class="a" style="left:214.2px;top:373.8px;width:59.2px;height:17.6px;background:#fff;border:1px solid #b4b4b4;border-radius:3px;"></div>
<div class="a" style="left:261.2px;top:374.8px;width:11.200000000000003px;height:15.600000000000001px;background:linear-gradient(#f6f6f6,#e2e2e2);border-left:1px solid #c4c4c4;border-radius:0 2px 2px 0;"></div>
<svg class="a" style="left:264.3px;top:376.8px;" width="6" height="11.6" viewBox="0 0 6 11.6"><path d="M0.3 4.4 L3 1 L5.7 4.4Z M0.3 7.2 L3 10.6 L5.7 7.2Z" fill="#777"/></svg>
<span class="t" style="left:220.00px;top:375.22px;font-size:11.5px;color:#222;letter-spacing:-0.503px;">116597</span>
<div class="a" style="left:277.5px;top:373.8px;width:60.1px;height:17.6px;background:#fff;border:1px solid #b4b4b4;border-radius:3px;"></div>
<div class="a" style="left:324.0px;top:374.8px;width:12.600000000000001px;height:15.600000000000001px;background:linear-gradient(#f6f6f6,#e2e2e2);border-left:1px solid #c4c4c4;border-radius:0 2px 2px 0;"></div>
<svg class="a" style="left:327.8px;top:376.8px;" width="6" height="11.6" viewBox="0 0 6 11.6"><path d="M0.3 4.4 L3 1 L5.7 4.4Z M0.3 7.2 L3 10.6 L5.7 7.2Z" fill="#777"/></svg>
<span class="t" style="left:283.30px;top:375.22px;font-size:11.5px;color:#222;letter-spacing:-0.419px;">119282</span>
<div class="a" style="left:341.1px;top:372px;width:23.5px;height:20.6px;background:linear-gradient(#fafafa,#e4e4e4);border:1px solid #b4b4b4;border-radius:3px;"></div>
<svg class="a" style="left:346.00px;top:379.80px" width="13.70" height="5.70" viewBox="-0.0 145.89 512.0 220.21" preserveAspectRatio="none"><path fill="#000" d="M377.941 169.941V216H134.059v-46.059c0-21.382-25.851-32.090-40.971-16.971L7.029 239.029c-9.373 9.373-9.373 24.568 0 33.941l86.059 86.059c15.119 15.119 40.971 4.411 40.971-16.971V296h243.882v46.059c0 21.382 25.851 32.090 40.971 16.971l86.059-86.059c9.373-9.373 9.373-24.568 0-33.941l-86.059-86.059c-15.119-15.120-40.971-4.412-40.971 16.970z"/></svg>
<div class="a" style="left:214.2px;top:396.4px;width:150.2px;height:21.2px;background:linear-gradient(#fafafa,#e4e4e4);border:1px solid #b4b4b4;border-radius:3px;"></div>
<svg class="a" style="left:351.3px;top:405.2px;" width="6" height="3.8" viewBox="0 0 6.4 4.2"><path d="M0 0 H6.4 L3.2 4.2Z" fill="#555"/></svg>
<span class="t" style="left:219.00px;top:399.52px;font-size:11.5px;color:#222;letter-spacing:-0.395px;">48000</span>
<div class="a" style="left:214.2px;top:420.4px;width:150.2px;height:21.2px;background:linear-gradient(#fafafa,#e4e4e4);border:1px solid #b4b4b4;border-radius:3px;"></div>
<svg class="a" style="left:351.3px;top:429.2px;" width="6" height="3.8" viewBox="0 0 6.4 4.2"><path d="M0 0 H6.4 L3.2 4.2Z" fill="#555"/></svg>
<span class="t" style="left:219.00px;top:423.72px;font-size:11.5px;color:#222;letter-spacing:-0.460px;">left</span>
<div class="a" style="left:214.2px;top:445.6px;width:150.2px;height:21.3px;background:linear-gradient(#fafafa,#e4e4e4);border:1px solid #b4b4b4;border-radius:3px;"></div>
<svg class="a" style="left:351.3px;top:454.45px;" width="6" height="3.8" viewBox="0 0 6.4 4.2"><path d="M0 0 H6.4 L3.2 4.2Z" fill="#555"/></svg>
<span class="t" style="left:219.00px;top:448.32px;font-size:11.5px;color:#222;letter-spacing:-0.487px;">Flute 4 036R</span>
<div class="a" style="left:385.3px;top:349px;width:1px;height:97px;background:linear-gradient(#e0e0e0,#999);"></div>
<svg class="a" style="left:384.8px;top:438px;" width="3" height="8.5" viewBox="0 0 3 8.5"><path d="M0.5 0 L2.4 8.5 H0.5Z" fill="#444"/></svg>
<svg class="a" style="left:393px;top:355.5px;" width="30" height="7" viewBox="0 0 30 7"><path d="M0 3.5 H29.5 M0.5 0 V7 M6.3 0 V7 M12.1 0 V7 M17.9 0 V7 M23.7 0 V7 M29.5 0 V7" stroke="#a2a2a2" stroke-width="1" fill="none"/></svg>
<div class="a" style="left:438.3px;top:348.8px;width:32.3px;height:20px;background:#333;border-radius:3px;"></div>
<span class="t" style="left:442.90px;top:351.18px;font-size:9px;color:#fff;font-weight:700;letter-spacing:-0.334px;">47 (B)</span>
<div class="a" style="left:469px;top:356.6px;width:24px;height:5px;background:#4a90d9;"></div>
<div class="a" style="left:489.4px;top:348.2px;width:21px;height:21px;background:#4a90d9;border-radius:50%;"></div>
<span class="t" style="left:495.40px;top:351.18px;font-size:9px;color:#fff;font-weight:700;letter-spacing:-0.505px;">26</span>
<svg class="a" style="left:510px;top:355.5px;" width="5" height="7" viewBox="0 0 5 7"><path d="M0 3.5 H4 M4 0 V7" stroke="#a2a2a2" stroke-width="1" fill="none"/></svg>
<span class="t" style="left:402.40px;top:371.55px;font-size:8.5px;color:#acacac;letter-spacing:-0.560px;">1,00</span>
<span class="t" style="left:426.80px;top:371.55px;font-size:8.5px;color:#acacac;letter-spacing:-0.405px;">124,52 Hz</span>
<span class="t" style="left:471.50px;top:371.55px;font-size:8.5px;color:#acacac;letter-spacing:-0.427px;">47</span>
<span class="t" style="left:511.40px;top:371.14px;font-size:6.8px;color:#acacac;letter-spacing:-0.181px;">100</span>
<span class="t" style="left:493.50px;top:371.55px;font-size:8.5px;color:#acacac;letter-spacing:-0.261px;">-15 /</span>
<span class="t" style="left:402.40px;top:382.65px;font-size:8.5px;color:#acacac;letter-spacing:-0.560px;">0,15</span>
<span class="t" style="left:426.80px;top:382.65px;font-size:8.5px;color:#acacac;letter-spacing:-0.405px;">120,12 Hz</span>
<span class="t" style="left:471.50px;top:382.65px;font-size:8.5px;color:#acacac;letter-spacing:-0.427px;">47</span>
<span class="t" style="left:511.40px;top:382.24px;font-size:6.8px;color:#acacac;letter-spacing:-0.181px;">100</span>
<span class="t" style="left:490.60px;top:382.65px;font-size:8.5px;color:#acacac;letter-spacing:-0.108px;">+48 /</span>
<span class="t" style="left:402.40px;top:393.75px;font-size:8.5px;color:#acacac;letter-spacing:-0.560px;">0,12</span>
<span class="t" style="left:426.80px;top:393.75px;font-size:8.5px;color:#acacac;letter-spacing:-0.405px;">130,38 Hz</span>
<span class="t" style="left:471.50px;top:393.75px;font-size:8.5px;color:#acacac;letter-spacing:-0.427px;">48</span>
<span class="t" style="left:511.40px;top:393.34px;font-size:6.8px;color:#acacac;letter-spacing:-0.181px;">100</span>
<span class="t" style="left:495.60px;top:393.75px;font-size:8.5px;color:#acacac;letter-spacing:-0.204px;">+6 /</span>
<span class="t" style="left:402.40px;top:404.85px;font-size:8.5px;color:#acacac;letter-spacing:-0.560px;">0,10</span>
<span class="t" style="left:426.80px;top:404.85px;font-size:8.5px;color:#acacac;letter-spacing:-0.405px;">375,01 Hz</span>
<span class="t" style="left:471.50px;top:404.85px;font-size:8.5px;color:#acacac;letter-spacing:-0.427px;">66</span>
<span class="t" style="left:511.40px;top:404.44px;font-size:6.8px;color:#acacac;letter-spacing:-0.181px;">100</span>
<span class="t" style="left:493.50px;top:404.85px;font-size:8.5px;color:#acacac;letter-spacing:-0.261px;">-23 /</span>
<span class="t" style="left:402.40px;top:415.95px;font-size:8.5px;color:#acacac;letter-spacing:-0.560px;">0,07</span>
<span class="t" style="left:426.80px;top:415.95px;font-size:8.5px;color:#acacac;letter-spacing:-0.335px;">114,26 Hz</span>
<span class="t" style="left:471.50px;top:415.95px;font-size:8.5px;color:#acacac;letter-spacing:-0.427px;">46</span>
<span class="t" style="left:511.40px;top:415.54px;font-size:6.8px;color:#acacac;letter-spacing:-0.181px;">100</span>
<span class="t" style="left:490.60px;top:415.95px;font-size:8.5px;color:#acacac;letter-spacing:-0.108px;">+34 /</span>
<span class="t" style="left:402.40px;top:427.05px;font-size:8.5px;color:#acacac;letter-spacing:-0.560px;">0,06</span>
<span class="t" style="left:426.80px;top:427.05px;font-size:8.5px;color:#acacac;letter-spacing:-0.405px;">136,23 Hz</span>
<span class="t" style="left:471.50px;top:427.05px;font-size:8.5px;color:#acacac;letter-spacing:-0.427px;">49</span>
<span class="t" style="left:511.40px;top:426.64px;font-size:6.8px;color:#acacac;letter-spacing:-0.181px;">100</span>
<span class="t" style="left:490.60px;top:427.05px;font-size:8.5px;color:#acacac;letter-spacing:-0.108px;">+30 /</span>
<div class="a" style="left:385.3px;top:448.6px;width:59.2px;height:18px;background:#fff;border:1px solid #b4b4b4;border-radius:3px;"></div>
<div class="a" style="left:431.3px;top:449.6px;width:12.200000000000003px;height:16px;background:linear-gradient(#f6f6f6,#e2e2e2);border-left:1px solid #c4c4c4;border-radius:0 2px 2px 0;"></div>
<svg class="a" style="left:434.90000000000003px;top:451.8px;" width="6" height="11.6" viewBox="0 0 6 11.6"><path d="M0.3 4.4 L3 1 L5.7 4.4Z M0.3 7.2 L3 10.6 L5.7 7.2Z" fill="#777"/></svg>
<span class="t" style="left:390.50px;top:450.32px;font-size:11.5px;color:#222;letter-spacing:-0.636px;">47 (B)</span>
<div class="a" style="left:448.3px;top:448.8px;width:49.8px;height:18px;background:#fff;border:1px solid #b4b4b4;border-radius:3px;"></div>
<div class="a" style="left:485.0px;top:449.8px;width:12.099999999999994px;height:16px;background:linear-gradient(#f6f6f6,#e2e2e2);border-left:1px solid #c4c4c4;border-radius:0 2px 2px 0;"></div>
<svg class="a" style="left:488.55px;top:452.0px;" width="6" height="11.6" viewBox="0 0 6 11.6"><path d="M0.3 4.4 L3 1 L5.7 4.4Z M0.3 7.2 L3 10.6 L5.7 7.2Z" fill="#777"/></svg>
<span class="t" style="left:453.50px;top:450.32px;font-size:11.5px;color:#222;letter-spacing:-0.706px;">-26</span>
<span class="t" style="left:468.50px;top:453.37px;font-size:7.6px;color:#999;letter-spacing:-0.893px;">100</span>
<div class="a" style="left:501.1px;top:447.4px;width:23.5px;height:19.5px;background:linear-gradient(#fafafa,#e4e4e4);border:1px solid #b4b4b4;border-radius:3px;"></div>
<svg class="a" style="left:507.50px;top:451.60px" width="11.40" height="11.10" viewBox="-0.05 37.65 448.05 436.7" preserveAspectRatio="none"><path fill="#000" d="M257.5 445.1l-22.2 22.2c-9.4 9.4-24.6 9.4-33.9 0L7 273c-9.4-9.4-9.4-24.6 0-33.9L201.400 44.7c9.4-9.4 24.6-9.4 33.9 0l22.2 22.2c9.5 9.5 9.3 25-.4 34.3L136.600 216H424c13.3 0 24 10.7 24 24v32c0 13.3-10.7 24-24 24H136.600l120.500 114.800c9.8 9.3 10 24.800.4 34.300z"/></svg>
<div class="a" style="left:548.65px;top:348.8px;width:5.2px;height:76.4px;background:linear-gradient(90deg,#b0b0b0,#d2d2d2);border:1px solid #a4a4a4;border-radius:2.6px;"></div>
<div class="a" style="left:548.65px;top:386px;width:5.2px;height:39.2px;background:linear-gradient(90deg,#3f86d4,#5b9de2);border:1px solid #3b7dc6;border-radius:2.6px;"></div>
<div class="a" style="left:544.65px;top:380.6px;width:13.2px;height:12px;background:linear-gradient(#fdfdfd,#e2e2e2);border:1px solid #a8a8a8;border-radius:2.5px;"></div>
<div class="a" style="left:558.65px;top:353.8px;width:4px;height:1px;background:#9c9c9c;"></div>
<div class="a" style="left:558.65px;top:364.33px;width:2.4px;height:1px;background:#9c9c9c;"></div>
<div class="a" style="left:558.65px;top:374.86px;width:2.4px;height:1px;background:#9c9c9c;"></div>
<div class="a" style="left:558.65px;top:385.39px;width:4px;height:1px;background:#9c9c9c;"></div>
<div class="a" style="left:558.65px;top:395.92px;width:2.4px;height:1px;background:#9c9c9c;"></div>
<div class="a" style="left:558.65px;top:406.45px;width:2.4px;height:1px;background:#9c9c9c;"></div>
<div class="a" style="left:558.65px;top:416.98px;width:4px;height:1px;background:#9c9c9c;"></div>
<span class="t" style="left:548.70px;top:425.02px;font-size:11.5px;color:#333;letter-spacing:-0.895px;">32</span>
<div class="a" style="left:568.87px;top:348.8px;width:5.2px;height:76.4px;background:linear-gradient(90deg,#b0b0b0,#d2d2d2);border:1px solid #a4a4a4;border-radius:2.6px;"></div>
<div class="a" style="left:568.87px;top:386px;width:5.2px;height:39.2px;background:linear-gradient(90deg,#3f86d4,#5b9de2);border:1px solid #3b7dc6;border-radius:2.6px;"></div>
<div class="a" style="left:564.87px;top:380.6px;width:13.2px;height:12px;background:linear-gradient(#fdfdfd,#e2e2e2);border:1px solid #a8a8a8;border-radius:2.5px;"></div>
<div class="a" style="left:578.87px;top:353.8px;width:4px;height:1px;background:#9c9c9c;"></div>
<div class="a" style="left:578.87px;top:364.33px;width:2.4px;height:1px;background:#9c9c9c;"></div>
<div class="a" style="left:578.87px;top:374.86px;width:2.4px;height:1px;background:#9c9c9c;"></div>
<div class="a" style="left:578.87px;top:385.39px;width:4px;height:1px;background:#9c9c9c;"></div>
<div class="a" style="left:578.87px;top:395.92px;width:2.4px;height:1px;background:#9c9c9c;"></div>
<div class="a" style="left:578.87px;top:406.45px;width:2.4px;height:1px;background:#9c9c9c;"></div>
<div class="a" style="left:578.87px;top:416.98px;width:4px;height:1px;background:#9c9c9c;"></div>
<span class="t" style="left:568.72px;top:425.02px;font-size:11.5px;color:#333;letter-spacing:-0.645px;">64</span>
<div class="a" style="left:589.09px;top:348.8px;width:5.2px;height:76.4px;background:linear-gradient(90deg,#b0b0b0,#d2d2d2);border:1px solid #a4a4a4;border-radius:2.6px;"></div>
<div class="a" style="left:589.09px;top:386px;width:5.2px;height:39.2px;background:linear-gradient(90deg,#3f86d4,#5b9de2);border:1px solid #3b7dc6;border-radius:2.6px;"></div>
<div class="a" style="left:585.09px;top:380.6px;width:13.2px;height:12px;background:linear-gradient(#fdfdfd,#e2e2e2);border:1px solid #a8a8a8;border-radius:2.5px;"></div>
<div class="a" style="left:599.09px;top:353.8px;width:4px;height:1px;background:#9c9c9c;"></div>
<div class="a" style="left:599.09px;top:364.33px;width:2.4px;height:1px;background:#9c9c9c;"></div>
<div class="a" style="left:599.09px;top:374.86px;width:2.4px;height:1px;background:#9c9c9c;"></div>
<div class="a" style="left:599.09px;top:385.39px;width:4px;height:1px;background:#9c9c9c;"></div>
<div class="a" style="left:599.09px;top:395.92px;width:2.4px;height:1px;background:#9c9c9c;"></div>
<div class="a" style="left:599.09px;top:406.45px;width:2.4px;height:1px;background:#9c9c9c;"></div>
<div class="a" style="left:599.09px;top:416.98px;width:4px;height:1px;background:#9c9c9c;"></div>
<span class="t" style="left:586.44px;top:425.02px;font-size:11.5px;color:#333;letter-spacing:-0.862px;">125</span>
<div class="a" style="left:609.31px;top:348.8px;width:5.2px;height:76.4px;background:linear-gradient(90deg,#b0b0b0,#d2d2d2);border:1px solid #a4a4a4;border-radius:2.6px;"></div>
<div class="a" style="left:609.31px;top:386px;width:5.2px;height:39.2px;background:linear-gradient(90deg,#3f86d4,#5b9de2);border:1px solid #3b7dc6;border-radius:2.6px;"></div>
<div class="a" style="left:605.31px;top:380.6px;width:13.2px;height:12px;background:linear-gradient(#fdfdfd,#e2e2e2);border:1px solid #a8a8a8;border-radius:2.5px;"></div>
<div class="a" style="left:619.31px;top:353.8px;width:4px;height:1px;background:#9c9c9c;"></div>
<div class="a" style="left:619.31px;top:364.33px;width:2.4px;height:1px;background:#9c9c9c;"></div>
<div class="a" style="left:619.31px;top:374.86px;width:2.4px;height:1px;background:#9c9c9c;"></div>
<div class="a" style="left:619.31px;top:385.39px;width:4px;height:1px;background:#9c9c9c;"></div>
<div class="a" style="left:619.31px;top:395.92px;width:2.4px;height:1px;background:#9c9c9c;"></div>
<div class="a" style="left:619.31px;top:406.45px;width:2.4px;height:1px;background:#9c9c9c;"></div>
<div class="a" style="left:619.31px;top:416.98px;width:4px;height:1px;background:#9c9c9c;"></div>
<span class="t" style="left:606.51px;top:425.02px;font-size:11.5px;color:#333;letter-spacing:-0.728px;">250</span>
<div class="a" style="left:629.53px;top:348.8px;width:5.2px;height:76.4px;background:linear-gradient(90deg,#b0b0b0,#d2d2d2);border:1px solid #a4a4a4;border-radius:2.6px;"></div>
<div class="a" style="left:629.53px;top:386px;width:5.2px;height:39.2px;background:linear-gradient(90deg,#3f86d4,#5b9de2);border:1px solid #3b7dc6;border-radius:2.6px;"></div>
<div class="a" style="left:625.53px;top:380.6px;width:13.2px;height:12px;background:linear-gradient(#fdfdfd,#e2e2e2);border:1px solid #a8a8a8;border-radius:2.5px;"></div>
<div class="a" style="left:639.53px;top:353.8px;width:4px;height:1px;background:#9c9c9c;"></div>
<div class="a" style="left:639.53px;top:364.33px;width:2.4px;height:1px;background:#9c9c9c;"></div>
<div class="a" style="left:639.53px;top:374.86px;width:2.4px;height:1px;background:#9c9c9c;"></div>
<div class="a" style="left:639.53px;top:385.39px;width:4px;height:1px;background:#9c9c9c;"></div>
<div class="a" style="left:639.53px;top:395.92px;width:2.4px;height:1px;background:#9c9c9c;"></div>
<div class="a" style="left:639.53px;top:406.45px;width:2.4px;height:1px;background:#9c9c9c;"></div>
<div class="a" style="left:639.53px;top:416.98px;width:4px;height:1px;background:#9c9c9c;"></div>
<span class="t" style="left:626.78px;top:425.02px;font-size:11.5px;color:#333;letter-spacing:-0.728px;">500</span>
<div class="a" style="left:649.75px;top:348.8px;width:5.2px;height:76.4px;background:linear-gradient(90deg,#b0b0b0,#d2d2d2);border:1px solid #a4a4a4;border-radius:2.6px;"></div>
<div class="a" style="left:649.75px;top:386px;width:5.2px;height:39.2px;background:linear-gradient(90deg,#3f86d4,#5b9de2);border:1px solid #3b7dc6;border-radius:2.6px;"></div>
<div class="a" style="left:645.75px;top:380.6px;width:13.2px;height:12px;background:linear-gradient(#fdfdfd,#e2e2e2);border:1px solid #a8a8a8;border-radius:2.5px;"></div>
<div class="a" style="left:659.75px;top:353.8px;width:4px;height:1px;background:#9c9c9c;"></div>
<div class="a" style="left:659.75px;top:364.33px;width:2.4px;height:1px;background:#9c9c9c;"></div>
<div class="a" style="left:659.75px;top:374.86px;width:2.4px;height:1px;background:#9c9c9c;"></div>
<div class="a" style="left:659.75px;top:385.39px;width:4px;height:1px;background:#9c9c9c;"></div>
<div class="a" style="left:659.75px;top:395.92px;width:2.4px;height:1px;background:#9c9c9c;"></div>
<div class="a" style="left:659.75px;top:406.45px;width:2.4px;height:1px;background:#9c9c9c;"></div>
<div class="a" style="left:659.75px;top:416.98px;width:4px;height:1px;background:#9c9c9c;"></div>
<span class="t" style="left:650.60px;top:425.02px;font-size:11.5px;color:#333;letter-spacing:-1.123px;">1k</span>
<div class="a" style="left:669.9699999999999px;top:348.8px;width:5.2px;height:76.4px;background:linear-gradient(90deg,#b0b0b0,#d2d2d2);border:1px solid #a4a4a4;border-radius:2.6px;"></div>
<div class="a" style="left:669.9699999999999px;top:386px;width:5.2px;height:39.2px;background:linear-gradient(90deg,#3f86d4,#5b9de2);border:1px solid #3b7dc6;border-radius:2.6px;"></div>
<div class="a" style="left:665.9699999999999px;top:380.6px;width:13.2px;height:12px;background:linear-gradient(#fdfdfd,#e2e2e2);border:1px solid #a8a8a8;border-radius:2.5px;"></div>
<div class="a" style="left:679.9699999999999px;top:353.8px;width:4px;height:1px;background:#9c9c9c;"></div>
<div class="a" style="left:679.9699999999999px;top:364.33px;width:2.4px;height:1px;background:#9c9c9c;"></div>
<div class="a" style="left:679.9699999999999px;top:374.86px;width:2.4px;height:1px;background:#9c9c9c;"></div>
<div class="a" style="left:679.9699999999999px;top:385.39px;width:4px;height:1px;background:#9c9c9c;"></div>
<div class="a" style="left:679.9699999999999px;top:395.92px;width:2.4px;height:1px;background:#9c9c9c;"></div>
<div class="a" style="left:679.9699999999999px;top:406.45px;width:2.4px;height:1px;background:#9c9c9c;"></div>
<div class="a" style="left:679.9699999999999px;top:416.98px;width:4px;height:1px;background:#9c9c9c;"></div>
<span class="t" style="left:670.52px;top:425.02px;font-size:11.5px;color:#333;letter-spacing:-0.773px;">2k</span>
<div class="a" style="left:690.1899999999999px;top:348.8px;width:5.2px;height:76.4px;background:linear-gradient(90deg,#b0b0b0,#d2d2d2);border:1px solid #a4a4a4;border-radius:2.6px;"></div>
<div class="a" style="left:690.1899999999999px;top:386px;width:5.2px;height:39.2px;background:linear-gradient(90deg,#3f86d4,#5b9de2);border:1px solid #3b7dc6;border-radius:2.6px;"></div>
<div class="a" style="left:686.1899999999999px;top:380.6px;width:13.2px;height:12px;background:linear-gradient(#fdfdfd,#e2e2e2);border:1px solid #a8a8a8;border-radius:2.5px;"></div>
<div class="a" style="left:700.1899999999999px;top:353.8px;width:4px;height:1px;background:#9c9c9c;"></div>
<div class="a" style="left:700.1899999999999px;top:364.33px;width:2.4px;height:1px;background:#9c9c9c;"></div>
<div class="a" style="left:700.1899999999999px;top:374.86px;width:2.4px;height:1px;background:#9c9c9c;"></div>
<div class="a" style="left:700.1899999999999px;top:385.39px;width:4px;height:1px;background:#9c9c9c;"></div>
<div class="a" style="left:700.1899999999999px;top:395.92px;width:2.4px;height:1px;background:#9c9c9c;"></div>
<div class="a" style="left:700.1899999999999px;top:406.45px;width:2.4px;height:1px;background:#9c9c9c;"></div>
<div class="a" style="left:700.1899999999999px;top:416.98px;width:4px;height:1px;background:#9c9c9c;"></div>
<span class="t" style="left:690.89px;top:425.02px;font-size:11.5px;color:#333;letter-spacing:-0.873px;">4k</span>
<div class="a" style="left:710.41px;top:348.8px;width:5.2px;height:76.4px;background:linear-gradient(90deg,#b0b0b0,#d2d2d2);border:1px solid #a4a4a4;border-radius:2.6px;"></div>
<div class="a" style="left:710.41px;top:386px;width:5.2px;height:39.2px;background:linear-gradient(90deg,#3f86d4,#5b9de2);border:1px solid #3b7dc6;border-radius:2.6px;"></div>
<div class="a" style="left:706.41px;top:380.6px;width:13.2px;height:12px;background:linear-gradient(#fdfdfd,#e2e2e2);border:1px solid #a8a8a8;border-radius:2.5px;"></div>
<div class="a" style="left:720.41px;top:353.8px;width:4px;height:1px;background:#9c9c9c;"></div>
<div class="a" style="left:720.41px;top:364.33px;width:2.4px;height:1px;background:#9c9c9c;"></div>
<div class="a" style="left:720.41px;top:374.86px;width:2.4px;height:1px;background:#9c9c9c;"></div>
<div class="a" style="left:720.41px;top:385.39px;width:4px;height:1px;background:#9c9c9c;"></div>
<div class="a" style="left:720.41px;top:395.92px;width:2.4px;height:1px;background:#9c9c9c;"></div>
<div class="a" style="left:720.41px;top:406.45px;width:2.4px;height:1px;background:#9c9c9c;"></div>
<div class="a" style="left:720.41px;top:416.98px;width:4px;height:1px;background:#9c9c9c;"></div>
<span class="t" style="left:711.16px;top:425.02px;font-size:11.5px;color:#333;letter-spacing:-0.873px;">8k</span>
<div class="a" style="left:730.63px;top:348.8px;width:5.2px;height:76.4px;background:linear-gradient(90deg,#b0b0b0,#d2d2d2);border:1px solid #a4a4a4;border-radius:2.6px;"></div>
<div class="a" style="left:730.63px;top:386px;width:5.2px;height:39.2px;background:linear-gradient(90deg,#3f86d4,#5b9de2);border:1px solid #3b7dc6;border-radius:2.6px;"></div>
<div class="a" style="left:726.63px;top:380.6px;width:13.2px;height:12px;background:linear-gradient(#fdfdfd,#e2e2e2);border:1px solid #a8a8a8;border-radius:2.5px;"></div>
<div class="a" style="left:740.63px;top:353.8px;width:4px;height:1px;background:#9c9c9c;"></div>
<div class="a" style="left:740.63px;top:364.33px;width:2.4px;height:1px;background:#9c9c9c;"></div>
<div class="a" style="left:740.63px;top:374.86px;width:2.4px;height:1px;background:#9c9c9c;"></div>
<div class="a" style="left:740.63px;top:385.39px;width:4px;height:1px;background:#9c9c9c;"></div>
<div class="a" style="left:740.63px;top:395.92px;width:2.4px;height:1px;background:#9c9c9c;"></div>
<div class="a" style="left:740.63px;top:406.45px;width:2.4px;height:1px;background:#9c9c9c;"></div>
<div class="a" style="left:740.63px;top:416.98px;width:4px;height:1px;background:#9c9c9c;"></div>
<span class="t" style="left:728.13px;top:425.02px;font-size:11.5px;color:#333;letter-spacing:-0.513px;">16k</span>
<div class="a" style="left:548.2px;top:450px;width:12.6px;height:12.6px;background:#fff;border:1px solid #b8b8b8;border-radius:2px;"></div>
<span class="t" style="left:565.80px;top:448.42px;font-size:11.5px;color:#333;letter-spacing:-0.375px;">preview</span>
<div class="a" style="left:689px;top:445.3px;width:25.3px;height:21.7px;background:linear-gradient(#fafafa,#e4e4e4);border:1px solid #b4b4b4;border-radius:3px;"></div>
<svg class="a" style="left:694.6px;top:449.6px;" width="14.6" height="13.6" viewBox="0 0 14.6 13.6"><path d="M2.4 0.7 V12.9 M7.3 0.7 V12.9 M12.2 0.7 V12.9" stroke="#000" stroke-width="1.6" fill="none" stroke-linecap="round"/><rect x="0.3" y="5.2" width="4.2" height="4.8" rx="1.2" fill="#000"/><rect x="5.2" y="3.8" width="4.2" height="4.8" rx="1.2" fill="#000"/><rect x="10.1" y="5.2" width="4.2" height="4.8" rx="1.2" fill="#000"/></svg>
<div class="a" style="left:720.2px;top:445.3px;width:25.7px;height:21.7px;background:linear-gradient(#fafafa,#e4e4e4);border:1px solid #b4b4b4;border-radius:3px;"></div>
<svg class="a" style="left:725.50px;top:450.60px" width="14.70" height="11.40" viewBox="0.0 65.1 512.0 381.8" preserveAspectRatio="none"><path fill="#000" d="M173.898 439.404l-166.4-166.4c-9.997-9.997-9.997-26.206 0-36.204l36.203-36.204c9.997-9.998 26.207-9.998 36.204 0L192 312.69 432.095 72.596c9.997-9.997 26.207-9.997 36.204 0l36.203 36.204c9.997 9.997 9.997 26.206 0 36.204l-294.4 294.401c-9.998 9.997-26.207 9.997-36.204-.001z"/></svg>
<div class="a" style="left:1px;top:473px;width:750px;height:22px;background:#4a90d9;"></div>
<span class="t" style="left:3.00px;top:476.72px;font-size:11.5px;color:#9fc3ed;letter-spacing:-0.724px;">Search...</span>
<span class="t" style="left:157.00px;top:476.72px;font-size:11.5px;color:#fff;font-weight:700;letter-spacing:-0.315px;">Sample linked to instrument:</span>
<span class="t" style="left:318.00px;top:476.72px;font-size:11.5px;color:#fff;letter-spacing:-0.294px;">Flûte 4'</span>
<div class="a" style="left:724px;top:473px;width:1px;height:22px;background:#b9d3f0;"></div>
<svg class="a" style="left:729.20px;top:475.30px" width="17.10" height="17.30" viewBox="-0.0 -0.0 512.0 512.0" preserveAspectRatio="none"><path fill="#fff" d="M326.612 185.391c59.747 59.809 58.927 155.698.36 214.59-.11.12-.24.25-.36.37l-67.200 67.200c-59.270 59.270-155.699 59.262-214.960 0-59.270-59.260-59.270-155.700 0-214.960l37.106-37.106c9.840-9.840 26.786-3.300 27.294 10.606.648 17.722 3.826 35.527 9.690 52.721 1.986 5.822.567 12.262-3.783 16.612l-13.087 13.087c-28.026 28.026-28.905 73.660-1.155 101.960 28.024 28.579 74.086 28.749 102.325.51l67.200-67.190c28.191-28.191 28.073-73.757 0-101.830-3.701-3.694-7.429-6.564-10.341-8.569a16.037 16.037 0 0 1-6.947-12.606c-.396-10.567 3.348-21.456 11.698-29.806l21.054-21.055c5.521-5.521 14.182-6.199 20.584-1.731a152.482 152.482 0 0 1 20.522 17.197zM467.547 44.449c-59.261-59.262-155.690-59.270-214.960 0l-67.200 67.200c-.12.12-.25.25-.36.37-58.566 58.892-59.387 154.781.36 214.590a152.454 152.454 0 0 0 20.521 17.196c6.402 4.468 15.064 3.789 20.584-1.731l21.054-21.055c8.350-8.350 12.094-19.239 11.698-29.806a16.037 16.037 0 0 0-6.947-12.606c-2.912-2.005-6.640-4.875-10.341-8.569-28.073-28.073-28.191-73.639 0-101.830l67.200-67.190c28.239-28.239 74.300-28.069 102.325.51 27.750 28.300 26.872 73.934-1.155 101.960l-13.087 13.087c-4.350 4.350-5.769 10.790-3.783 16.612 5.864 17.194 9.042 34.999 9.690 52.721.509 13.906 17.454 20.446 27.294 10.606l37.106-37.106c59.271-59.259 59.271-155.699.001-214.959z"/></svg>
</body></html>
